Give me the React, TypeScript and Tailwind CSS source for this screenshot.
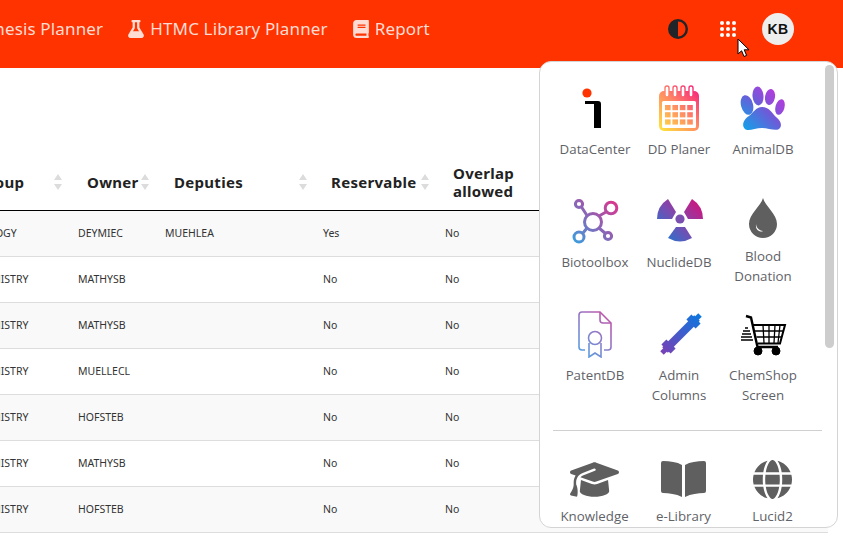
import { FaBook, FaFlask } from "react-icons/fa";
import { FaCircleHalfStroke, FaGlobe, FaGraduationCap } from "react-icons/fa6";

const rows = [
  { group: "BIOLOGY", owner: "DEYMIEC", deputies: "MUEHLEA", reservable: "Yes", overlap: "No" },
  { group: "CHEMISTRY", owner: "MATHYSB", deputies: "", reservable: "No", overlap: "No" },
  { group: "CHEMISTRY", owner: "MATHYSB", deputies: "", reservable: "No", overlap: "No" },
  { group: "CHEMISTRY", owner: "MUELLECL", deputies: "", reservable: "No", overlap: "No" },
  { group: "CHEMISTRY", owner: "HOFSTEB", deputies: "", reservable: "No", overlap: "No" },
  { group: "CHEMISTRY", owner: "MATHYSB", deputies: "", reservable: "No", overlap: "No" },
  { group: "CHEMISTRY", owner: "HOFSTEB", deputies: "", reservable: "No", overlap: "No" },
];

function SortArrows() {
  return (
    <svg width="8" height="16" viewBox="0 0 8 16" className="shrink-0">
      <path d="M4 0 L8 6 H0 Z M0 10 H8 L4 16 Z" fill="#dcdcdc" />
    </svg>
  );
}

function Grad({ id, from, to, mid }: { id: string; from: string; to: string; mid?: string }) {
  return (
    <defs>
      <linearGradient id={id} gradientUnits="userSpaceOnUse" x1="4" y1="46" x2="46" y2="4">
        <stop offset="0" stopColor={from} />
        {mid && <stop offset="0.5" stopColor={mid} />}
        <stop offset="1" stopColor={to} />
      </linearGradient>
    </defs>
  );
}

function DataCenterIcon() {
  return (
    <svg width="48" height="48" viewBox="0 0 48 48">
      <circle cx="16" cy="9" r="4.6" fill="#ff3300" />
      <path d="M14 17 H27 a3 3 0 0 1 3 3 V44 H23 V20 H14 Z" fill="#000" />
    </svg>
  );
}

function CalendarIcon() {
  const cells = [];
  for (let r = 0; r < 3; r++) {
    for (let c = 0; c < 4; c++) {
      cells.push(<rect key={`${r}-${c}`} x={10 + c * 7.4} y={21 + r * 7.2} width="5.6" height="5.2" fill="url(#cal)" />);
    }
  }
  return (
    <svg width="48" height="48" viewBox="0 0 48 48">
      <Grad id="cal" from="#ffe53b" mid="#ff8a65" to="#f5167e" />
      <rect x="4" y="7" width="40" height="40" rx="5" fill="url(#cal)" />
      <rect x="7" y="17" width="34" height="27" rx="1.5" fill="#fff" />
      {[12, 20, 28, 36].map((x) => (
        <rect key={x} x={x - 2} y="2" width="4" height="11" rx="2" fill="#fff" stroke="url(#cal)" strokeWidth="1.4" />
      ))}
      {cells}
    </svg>
  );
}

function PawIcon() {
  return (
    <svg width="48" height="48" viewBox="0 0 48 48">
      <Grad id="paw" from="#0ea5e9" mid="#6d5bd8" to="#d62ce0" />
      <ellipse cx="8" cy="21" rx="6" ry="10" transform="rotate(-15 8 21)" fill="url(#paw)" />
      <ellipse cx="19" cy="12" rx="5.5" ry="9.5" transform="rotate(-5 19 12)" fill="url(#paw)" />
      <ellipse cx="31" cy="13" rx="5" ry="8" transform="rotate(10 31 13)" fill="url(#paw)" />
      <ellipse cx="41" cy="23" rx="4.5" ry="8" transform="rotate(15 41 23)" fill="url(#paw)" />
      <path d="M23 23 C30 23 33 29 37 33 C42 37 43 41 41 44 C38 48 30 44 23 44 C16 44 9 48 6 45 C2 41 5 35 10 32 C14 29 17 23 23 23 Z" fill="url(#paw)" />
    </svg>
  );
}

function BiotoolboxIcon() {
  return (
    <svg width="48" height="48" viewBox="0 0 48 48" fill="none" stroke="url(#bio)" strokeWidth="3">
      <Grad id="bio" from="#3b9ede" mid="#8e63b5" to="#e0338a" />
      <circle cx="22" cy="25" r="8.5" />
      <circle cx="8" cy="7" r="3.6" />
      <circle cx="40" cy="11" r="5.8" />
      <circle cx="8" cy="40" r="5" />
      <circle cx="37" cy="39" r="3.6" />
      <path d="M10.5 10 L16 18.5 M35 15 L28 19 M12 36 L16 31 M28 31 L34.5 36.5" />
    </svg>
  );
}

function NuclideIcon() {
  return (
    <svg width="48" height="48" viewBox="0 0 48 48">
      <Grad id="nuc" from="#0f7fd6" mid="#7b4bb0" to="#d5107a" />
      <circle cx="25" cy="22" r="4.6" fill="#7a4fb0" />
      <path d="M21 15 L13 2 A24 24 0 0 0 2 22 L17 22 Z" fill="url(#nuc)" />
      <path d="M29 15 L37 2 A24 24 0 0 1 48 22 L33 22 Z" fill="url(#nuc)" />
      <path d="M21 30 L13 41 A24 24 0 0 0 37 41 L30 30 Z" fill="url(#nuc)" />
    </svg>
  );
}

function DropIcon() {
  return (
    <svg width="48" height="42" viewBox="0 0 48 42">
      <path d="M24 1 C26 9 38 17 38 27 A14 14 0 0 1 10 27 C10 17 22 9 24 1 Z" fill="#5f5f5f" />
      <path d="M17 27 C17.5 31 20 33.5 24 34 C22 35.5 16 34 17 27 Z" fill="#fff" />
    </svg>
  );
}

function PatentIcon() {
  return (
    <svg width="48" height="48" viewBox="0 0 48 48" fill="none" stroke="url(#pat)" strokeWidth="1.6">
      <Grad id="pat" from="#49a8e8" mid="#8d7cc8" to="#d1469f" />
      <path d="M14 40 H11 a3 3 0 0 1 -3 -3 V5 a3 3 0 0 1 3 -3 H29 L40 13 V37 a3 3 0 0 1 -3 3 H33" />
      <path d="M29 2 V10 a3 3 0 0 0 3 3 H40" />
      <circle cx="24" cy="28" r="6.5" />
      <path d="M18 33 V47 L24 43 L30 47 V33" />
    </svg>
  );
}

function ColumnIcon() {
  return (
    <svg width="48" height="48" viewBox="0 0 48 48" fill="none" stroke="url(#col)">
      <defs>
        <linearGradient id="col" gradientUnits="userSpaceOnUse" x1="6" y1="44" x2="46" y2="4">
          <stop offset="0" stopColor="#7b3fb5" />
          <stop offset="1" stopColor="#0a78e0" />
        </linearGradient>
      </defs>
      <path d="M7 43 L45 5" strokeWidth="5" />
      <path d="M10 40 L42 8" strokeWidth="8" />
      <path d="M11 39 L16 34 M36 14 L41 9" strokeWidth="13" />
    </svg>
  );
}

function CartIcon() {
  return (
    <svg width="48" height="48" viewBox="0 0 48 48" fill="none" stroke="#000">
      <path d="M7 6 L12 7.5 L18.5 37 H39" strokeWidth="2.4" />
      <path d="M14 15 H46 L41 33.5 H19" strokeWidth="2" />
      <path d="M24 15 L25 33 M30 15 L30 33 M36 15 L35 33 M41 15 L39 33 M16 21 H44 M17.5 27 H43" strokeWidth="1.3" />
      <circle cx="19" cy="41" r="4" fill="#000" />
      <circle cx="37" cy="41" r="4" fill="#000" />
      <path d="M6 18 H9 M4 21 H11 M3 24 H12 M2 27 H13 M2 30 H14" strokeWidth="1.6" />
    </svg>
  );
}

function BookIcon() {
  return (
    <svg width="45" height="38" viewBox="0 0 45 38" fill="#5f5f5f">
      <path d="M2 1 C9 1 16 2 21 5 V37 C15 34 8 33 2 33 a2 2 0 0 1 -2 -2 V3 a2 2 0 0 1 2 -2 Z" />
      <path d="M43 1 C36 1 29 2 24 5 V37 C30 34 37 33 43 33 a2 2 0 0 0 2 -2 V3 a2 2 0 0 0 -2 -2 Z" />
    </svg>
  );
}

function AppTile({ icon, label }: { icon: React.ReactNode; label: string }) {
  return (
    <div className="flex h-[113px] w-full flex-col items-center">
      {icon}
      <span className="mt-[7px] text-center text-[13.3px] leading-[20px] text-[#5f6368]">{label}</span>
    </div>
  );
}

function AppsPanel() {
  return (
    <div className="absolute left-[539px] top-[61px] h-[467px] w-[299px] overflow-hidden rounded-xl border border-[#d4d4d4] bg-white pl-[13px] pt-[22px] font-['Open_Sans',sans-serif]">
      <div className="grid w-[252px] grid-cols-3">
        <AppTile icon={<DataCenterIcon />} label="DataCenter" />
        <AppTile icon={<CalendarIcon />} label="DD Planer" />
        <AppTile icon={<PawIcon />} label="AnimalDB" />
        <AppTile icon={<BiotoolboxIcon />} label="Biotoolbox" />
        <AppTile icon={<NuclideIcon />} label="NuclideDB" />
        <AppTile icon={<DropIcon />} label="Blood Donation" />
        <AppTile icon={<PatentIcon />} label="PatentDB" />
        <AppTile icon={<ColumnIcon />} label="Admin Columns" />
        <AppTile icon={<CartIcon />} label="ChemShop Screen" />
      </div>
      <div className="mt-[7px] h-px w-[269px] bg-[#d0d0d0]" />
      <div className="ml-[-3px] mt-[28px] grid w-[267px] grid-cols-3">
        <AppTile
          icon={
            <div className="flex h-[40px] items-center text-[#5f5f5f]">
              <FaGraduationCap size={49} />
            </div>
          }
          label="Knowledge"
        />
        <AppTile
          icon={
            <div className="flex h-[40px] items-center">
              <BookIcon />
            </div>
          }
          label="e-Library"
        />
        <AppTile
          icon={
            <div className="flex h-[40px] items-center text-[#5f5f5f]">
              <FaGlobe size={39} />
            </div>
          }
          label="Lucid2"
        />
      </div>
      {/* scrollbar */}
      <div className="absolute right-[3px] top-[3px] h-[283px] w-[9px] rounded-full bg-[#cdcdcd]" />
    </div>
  );
}

export default function App() {
  return (
    <div className="relative h-[547px] w-[843px] overflow-hidden bg-white font-['Noto_Sans',sans-serif]">
      <header className="flex h-[68px] items-center bg-[#ff3300] pb-[10px] text-[17px] tracking-[0.15px] text-[#ffdcd3]">
        <nav className="ml-[-64px] flex items-center gap-[24px]">
          <a className="flex items-center gap-[5px]">
            <FaFlask size={18} />
            <span>Synthesis Planner</span>
          </a>
          <a className="flex items-center gap-[5px]">
            <FaFlask size={18} />
            <span>HTMC Library Planner</span>
          </a>
          <a className="flex items-center gap-[5px]">
            <FaBook size={18} />
            <span>Report</span>
          </a>
        </nav>
        <div className="ml-auto mr-[49px] flex items-center">
          <FaCircleHalfStroke size={20} className="text-[#212529]" />
          <div className="ml-[32px] grid grid-cols-3 gap-[2px]">
            {Array.from({ length: 9 }).map((_, i) => (
              <span key={i} className="h-[4px] w-[4px] rounded-full bg-white" />
            ))}
          </div>
          <div className="ml-[26px] flex h-[32px] w-[32px] items-center justify-center rounded-full bg-[#eeeeee] font-['Liberation_Sans',sans-serif] text-[14px] font-bold tracking-[0.5px] text-[#111]">
            KB
          </div>
        </div>
      </header>

      <main className="ml-[-42px] w-[870px] pt-[91px]">
        <table className="w-full table-fixed border-collapse text-[#333]">
          <colgroup>
            <col className="w-[108px]" />
            <col className="w-[87px]" />
            <col className="w-[158px]" />
            <col className="w-[122px]" />
            <col />
          </colgroup>
          <thead>
            <tr className="h-[51px] border-b border-black text-[15px] font-bold leading-[18px] tracking-[0.3px] text-[#222]">
              {["Group", "Owner", "Deputies", "Reservable"].map((title) => (
                <th key={title} className={`${title === "Group" ? "pl-[19px]" : title === "Reservable" ? "pl-[20px]" : "pl-[21px]"} pb-[4px] pr-[4px] text-left font-bold`}>
                  <div className="flex items-center justify-between">
                    <span>{title}</span>
                    <SortArrows />
                  </div>
                </th>
              ))}
              <th className="pb-[4px] pl-[20px] text-left font-bold">
                Overlap
                <br />
                allowed
              </th>
            </tr>
          </thead>
          <tbody className="text-[10.5px]">
            {rows.map((row, i) => (
              <tr key={i} className={`h-[46px] border-b border-[#dddddd] ${i % 2 === 0 ? "bg-[#f9f9f9]" : "bg-white"}`}>
                <td className="pl-[13px] pt-[2px]">{row.group}</td>
                <td className="pl-[12px] pt-[2px]">{row.owner}</td>
                <td className="pl-[12px] pt-[2px]">{row.deputies}</td>
                <td className="pl-[12px] pt-[2px]">{row.reservable}</td>
                <td className="pl-[12px] pt-[2px]">{row.overlap}</td>
              </tr>
            ))}
          </tbody>
        </table>
      </main>

      <AppsPanel />

      {/* mouse cursor */}
      <svg width="14" height="20" viewBox="0 0 14 20" className="absolute left-[737px] top-[38px]">
        <path d="M1 1 V16 L4.6 12.8 L7 18.5 L9.6 17.4 L7.2 11.8 H12 Z" fill="#fff" stroke="#000" strokeWidth="1" />
      </svg>
    </div>
  );
}
